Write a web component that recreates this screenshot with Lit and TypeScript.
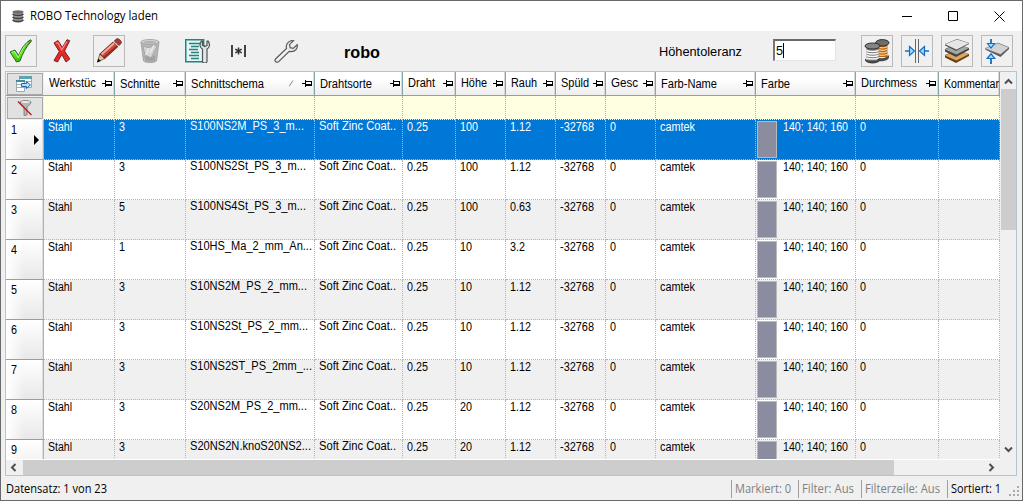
import { LitElement, html, css, svg } from "lit";
import { customElement, property } from "lit/decorators.js";
import { classMap } from "lit/directives/class-map.js";
import { styleMap } from "lit/directives/style-map.js";

/* A single line of text condensed or widened to a given pixel width. */
@customElement("fit-text")
class FitText extends LitElement {
  @property({ type: Number }) w = 0;
  @property() text = "";
  static styles = css`
    :host { display: block; white-space: pre; overflow: visible; flex: none; }
    .t { display: inline-block; transform-origin: 0 0; }
  `;
  render() {
    return html`<span class="t">${this.text}</span>`;
  }
  updated() {
    const el = this.renderRoot.querySelector(".t") as HTMLElement;
    this.style.width = this.w + "px";
    const natural = el.getBoundingClientRect().width;
    if (natural > 0) el.style.transform = `scaleX(${this.w / natural})`;
  }
}

interface Column { name: string; width: number; textWidth: number; low?: boolean; sort?: boolean; pin?: boolean }

const columns: Column[] = [
  { name: "Werkstüc", width: 71, textWidth: 47 },
  { name: "Schnitte", width: 71, textWidth: 40, low: true },
  { name: "Schnittschema", width: 129, textWidth: 73, low: true, sort: true },
  { name: "Drahtsorte", width: 88, textWidth: 52, low: true },
  { name: "Draht", width: 53, textWidth: 27 },
  { name: "Höhe", width: 50, textWidth: 26 },
  { name: "Rauh", width: 50, textWidth: 26 },
  { name: "Spüld", width: 50, textWidth: 28 },
  { name: "Gesc", width: 50, textWidth: 27 },
  { name: "Farb-Name", width: 100, textWidth: 56, low: true },
  { name: "Farbe", width: 100, textWidth: 29, low: true },
  { name: "Durchmess", width: 83, textWidth: 56 },
  { name: "Kommentar", width: 61, textWidth: 55, low: true, pin: false },
];

const records: [string, string, number, string, string][] = [
  ["3", "S100NS2M_PS_3_m...", 114, "100", "1.12"],
  ["3", "S100NS2St_PS_3_m...", 116, "100", "1.12"],
  ["5", "S100NS4St_PS_3_m...", 116, "100", "0.63"],
  ["1", "S10HS_Ma_2_mm_An...", 122, "10", "3.2"],
  ["3", "S10NS2M_PS_2_mm...", 117, "10", "1.12"],
  ["3", "S10NS2St_PS_2_mm...", 118, "10", "1.12"],
  ["3", "S10NS2ST_PS_2mm_...", 122, "10", "1.12"],
  ["3", "S20NS2M_PS_2_mm...", 117, "20", "1.12"],
  ["3", "S20NS2N.knoS20NS2...", 121, "20", "1.12"],
];

const numWidth: Record<string, number> = { "100": 18, "10": 12, "20": 12, "1.12": 21, "0.63": 21, "3.2": 15 };

const pin = html`<svg class="pin" width="10" height="9" viewBox="0 0 10 9" shape-rendering="crispEdges">
  <path d="M0 4h4v1H0zM3 1h1v7H3z" fill="#000"/><path fill-rule="evenodd" d="M4 2h6v5H4zM4 3v2h5V3z" fill="#000"/></svg>`;

const wrenchPath = "M1.5 22.5c-1-1-.6-2 .5-3L12.500 9.500c-.8-3.500 1-7 5-8l2 .2-4 4 .7 3 3 .7 4-3.700c.8 3-1.500 7-6 7l-2-.3L5 22.300c-1 1.200-2.500 1.200-3.500.2z";

const icons = {
  check: svg`<svg width="24" height="24" viewBox="0 0 24 24"><defs><linearGradient id="g" x1="0" y1="0" x2="0" y2="1"><stop offset="0" stop-color="#2fae10"/><stop offset=".6" stop-color="#62f018"/><stop offset="1" stop-color="#35b708"/></linearGradient></defs>
    <path d="M1 13l5-2 3.500 5.500C12 10 16 4 21.500.700L22.500 2C17 8 13.500 14.500 11 22l-3.500 1z" fill="url(#g)" stroke="#385d2b" stroke-width="1"/><path d="M2.800 13.300l2.700-1 3.700 6.500C12 12 15 7 19 3.500" fill="none" stroke="#c9ffb0" stroke-width=".8"/></svg>`,
  cross: svg`<svg width="18" height="24" viewBox="0 0 18 24"><path d="M1 4l4-2.500 4.300 7L14 .7l2.700 1L11.500 12l5.300 8-3.800 3-4.200-7.500L4.500 23 1 21.500l5.300-9z" fill="#e52a2a" stroke="#7d2020"/><path d="M2.800 4.500l2-1 4 7.300 5-8.300" fill="none" stroke="#ff8d88" stroke-width="1.200"/></svg>`,
  pencil: svg`<svg width="26" height="26" viewBox="0 0 26 26"><path d="M1.500 24l2.300-8 5 4.500z" fill="#e6c091" stroke="#5e4530" stroke-width=".7"/><path d="M1 24.500l1.200-4 2.700 2.400z" fill="#16120f"/><path d="M3.800 16L17 4l5 4.500L8.800 20.500z" fill="#cc473b" stroke="#612019" stroke-width=".9"/><path d="M5.500 16.600L18 5.200" stroke="#f5a69a" stroke-width="2"/><path d="M8 19.500L21 8" stroke="#8c281f" stroke-width="1.300"/><path d="M17 4l1.200-1.100 5 4.500L22 8.500z" fill="#bcc0c5"/><path d="M18.200 2.900L20.500.8c1.500-1 6 2.500 4.800 4.500l-2.100 2.100z" fill="#a83a33" stroke="#63211c" stroke-width=".6"/></svg>`,
  trash: svg`<svg width="20" height="24" viewBox="0 0 20 24"><path d="M1 3l2.500 19c2 2 11 2 13 0L19 3z" fill="#b8b8b8" stroke="#999" stroke-width=".8"/><path d="M3 7l6 2 5-3 3 1-6 12-6-3z" fill="#d6d6d6" stroke="#999" stroke-width=".7"/><path d="M9 9l-3 7M14 6l-4 8" stroke="#f4f4f4"/><path d="M4.500 17l.8 4.500c2 1.200 7.500 1.200 9.500 0l.8-6-4 3z" fill="#a2a2a2"/><ellipse cx="10" cy="3" rx="9" ry="2.500" fill="#d2d2d2" stroke="#999" stroke-width=".8"/><ellipse cx="10" cy="3.300" rx="6.500" ry="1.300" fill="#b0b0b0"/></svg>`,
  sheet: svg`<svg width="26" height="24" viewBox="0 0 26 24"><path d="M.7.7h18v22H.7z" fill="#e7f6f5" stroke="#27817f" stroke-width="1.400"/><path d="M4 4.500h12M6 7.500h8M4 10.500h9M6 13.500h8M4 16.500h10M6 19.500h8" stroke="#27817f" stroke-width="1.300"/><path d="M1.500 1.500v20" stroke="#7cc1bf"/><path d="M17.500 23V10c-2.500-1-3.500-5-1-8l1 .3v4l2.200 1.200L22 6.300v-4l1-.3c2.500 3 1.500 7-1 8v13c-1 1.300-3.500 1.300-4.500 0z" fill="#e5e5e5" stroke="#4d5656" stroke-width="1.200"/></svg>`,
  star: svg`<svg width="15" height="14" viewBox="0 0 15 14"><path d="M1 1v12M14 1v12" stroke="#303030" stroke-width="1.800"/><path d="M7.500 3.500v7M4.300 5.200l6.400 3.600M10.700 5.200L4.300 8.800" stroke="#303030" stroke-width="1.500"/></svg>`,
  wrench: svg`<svg width="24" height="24" viewBox="0 0 24 24"><path d="${wrenchPath}" fill="#e9e9e9" stroke="#5c5c5c" stroke-width="1.200"/><path d="M3 21L14 10.500" stroke="#fff"/></svg>`,
  spools: svg`<svg width="26" height="25" viewBox="0 0 26 25"><path d="M13 4v14h10.500V4z" fill="#b5651c"/><path d="M14 8c3 1 7 1 9.500-.5M14 10.500c3 1 7 1 9.500-.5M14 13c3 1 7 1 9.500-.5M14 15.500c3 1 7 1 9.500-.5" fill="none" stroke="#ffd08a" stroke-width="1.300"/><path d="M13 18.500c5 1.500 10 .5 12-2.500v2.500c-1 3.500-8 4.500-12 3.500z" fill="#4a4a4a"/><ellipse cx="18.300" cy="3.800" rx="6.700" ry="3.200" fill="#6d6d6d" stroke="#303030"/><path d="M2.500 8v12c3 2.500 9 2.500 12 0V8z" fill="#777"/><path d="M2.500 11.500c3 1.300 9 1.300 12 0M2.500 14c3 1.300 9 1.300 12 0M2.500 16.500c3 1.300 9 1.300 12 0M2.500 19c3 1.300 9 1.300 12 0" fill="none" stroke="#fafafa" stroke-width="1.500"/><path d="M1 19.500c2 3 13 3 15 0v2c-2 4-13 4-15 0z" fill="#454545"/><ellipse cx="8.500" cy="7" rx="7.500" ry="3" fill="#858585" stroke="#303030"/></svg>`,
  gap: svg`<svg width="24" height="24" viewBox="0 0 24 24"><path d="M10.500 0v24M13.500 0v24" stroke="#666"/><path d="M0 12h5M24 12h-5" stroke="#146ec2" stroke-width="1.500"/><path d="M4.500 7.500L9.500 12l-5 4.500zM19.500 7.500l-5 4.500 5 4.500z" fill="#9edcff" stroke="#126dc7" stroke-width="1.200"/></svg>`,
  layers: svg`<svg width="26" height="25" viewBox="0 0 26 25"><path d="M1 18.500l11 5.500 13-7v-2l-12-4-12 5z" fill="#6b4116"/><path d="M1 16.500l12-5 12 3.500-12.500 6.500z" fill="#dfa65c"/><path d="M1 12.500l11 5.500 13-7V9L13 5 1 10z" fill="#444"/><path d="M1 10.500l12-5 12 3.500-12.500 6.500z" fill="#a7a7a7"/><path d="M1 6.500L12 12l13-7V4L13 0 1 5z" fill="#555"/><path d="M1 5.200L13 .5l12 3.800L12.500 10.500z" fill="#e6e6e6"/></svg>`,
  height: svg`<svg width="26" height="25" viewBox="0 0 26 25"><path d="M1 10.500L16.500 18 25 10V8.500L14 4z" fill="#595959"/><path d="M1 9.500L14 4l11 4.500-8.500 7z" fill="#d2d2d2" stroke="#777" stroke-width=".6"/><path d="M7 0v5M7 25v-5" stroke="#126dc7" stroke-width="1.800"/><path d="M3.500 4.500l3.500 4.500 3.500-4.500zM3.200 19.500L7 14.800l3.800 4.700z" fill="#a7dfff" stroke="#126dc7" stroke-width="1.200"/></svg>`,
  tables: svg`<svg width="18" height="17" viewBox="0 0 18 17"><path d="M3.500.5h12v11h-12z" fill="#fff" stroke="#9aa9ad"/><path d="M3 0h13v3H3z" fill="#5ba5b2"/><path d="M.5 4.500h8v11h-8z" fill="#fff" stroke="#9aa9ad"/><path d="M0 4h9v2H0z" fill="#448b98"/><path d="M1 8.500h7M1 11.500h7M9 5.500h6" stroke="#a5afb3"/><path d="M5.500 7.500h5v-2l4 3.500-4 3.500v-2h-5z" fill="#b7e0ff" stroke="#1767b5"/></svg>`,
  filter: svg`<svg width="16" height="16" viewBox="0 0 16 16"><path d="M3 2c2-2 9-2 11 0 0 2-3 4-4 5v8l-3 .5V7C6 6 3 4 3 2z" fill="#b7b7b7" stroke="#727272" stroke-width=".8"/><ellipse cx="8.500" cy="2" rx="4.500" ry="1" fill="#e8e8e8"/><path d="M1 1.500L14.500 15" stroke="#b82222" stroke-width="1.500"/></svg>`,
  app: svg`<svg width="12" height="13" viewBox="0 0 12 13"><path d="M1 2v9c1.500 2 8.500 2 10 0V2z" fill="#999"/><path d="M.5 4c2 2 9 2 11 0M.5 7c2 2 9 2 11 0M.5 10c2 2 9 2 11 0" fill="none" stroke="#404040" stroke-width="1.300"/><ellipse cx="6" cy="2" rx="5.500" ry="1.700" fill="#6c6c6c"/></svg>`,
};

const chevron = (d: string) => svg`<svg width="9" height="9" viewBox="0 0 9 9"><path d="${d}" fill="none" stroke="#505050" stroke-width="2"/></svg>`;

@customElement("app-root")
class AppRoot extends LitElement {
  static styles = css`
    :host { display: block; width: 1023px; height: 501px; overflow: hidden; color: #000; font: 12px/14px "Liberation Sans", Arial, sans-serif; }
    * { box-sizing: border-box; }
    svg { display: block; flex: none; }
    .window { width: 1023px; height: 501px; border: 1px solid #67696b; background: #f0f0f0; display: flex; flex-direction: column; }
    .title { height: 30px; flex: none; background: #fff; display: flex; align-items: center; padding-left: 11px; font: 12px/16px "Open Sans", "Noto Sans", sans-serif; }
    .title fit-text { margin-left: 6px; }
    .controls { margin-left: auto; display: flex; gap: 36px; padding-right: 17px; }
    .toolbar { height: 40px; flex: none; display: flex; align-items: center; padding: 0 9px 0 4px; }
    .tool { width: 32px; height: 32px; flex: none; display: flex; align-items: center; justify-content: center; }
    .framed { border: 1px solid #b9b9b9; }
    .gap8 { margin-left: 8px; }
    .gap9 { margin-left: 9px; }
    .gap15 { margin-left: 15px; }
    .gap16 { margin-left: 16px; }
    .brand { font: bold 16px/20px "Liberation Sans", sans-serif; margin: 4px 0 0 42px; }
    .label { font-size: 13px; line-height: 16px; margin: 1px 0 0 auto; }
    .input { width: 63px; height: 22px; margin: 0 25px 3px 31px; border: 1px solid #e3e3e3; border-top: 2px solid #696969; border-left: 2px solid #777; background: #fff; display: flex; padding: 2px 0 0 1px; font-size: 13px; line-height: 15px; }
    .caret { width: 1px; height: 15px; background: #000; }
    .grid { width: 1012px; height: 405px; margin-left: 4px; flex: none; border: 1px solid #b3c6d3; display: grid; grid-template-columns: 994px 16px; grid-template-rows: 387px 16px; }
    .view { overflow: hidden; background: #fff; }
    .line { display: flex; height: 40px; width: 994px; }
    .head { height: 24px; border-bottom: 1px solid #86a5a6; }
    .filters { height: 24px; }
    .corner { width: 38px; flex: none; padding: 1px 1px 0; background: #f0f0f0; }
    .cornerbox { height: 22px; width: 36px; background: #e1e1e1; border: 1px solid #a8a8a8; display: flex; align-items: center; justify-content: center; }
    .hcell { flex: none; height: 23px; display: flex; align-items: flex-start; padding: 4px 2px 0 5px; background: linear-gradient(#fff 0 30%, #eee); border-right: 1px solid #86a5a6; box-shadow: inset -1px 0 #d9d9d9; overflow: hidden; }
    .hcell.low { padding-top: 5px; }
    .hcell .pin { margin: 3px 0 0 auto; }
    .hcell.low .pin { margin-top: 2px; }
    .sort { margin: 3px 0 0 auto; }
    .hcell .sort + .pin { margin-left: 7px; }
    .fcell { flex: none; background: #ffffe1; border-right: 1px dotted #b0b0b0; border-bottom: 1px dotted #0078d7; }
    .rownum { width: 38px; flex: none; font-size: 12px; padding: 3px 2px 0 5px; background: linear-gradient(90deg, #fff, transparent 50%), linear-gradient(#fff, #e8e8e8); border-bottom: 1px solid #86a5a6; border-right: 1px solid #aab4b4; box-shadow: inset -1px 0 #ddd; }
    .arrow { margin: -2px 0 0 23px; }
    .cell { flex: none; padding: 1px 0 0 4px; border-right: 1px dotted #b5b5b5; border-bottom: 1px dotted #b5b5b5; background: #fff; overflow: hidden; display: flex; }
    .cell fit-text { margin-top: -1px; }
    .cell.up fit-text { margin-top: -2px; }
    .alt .cell { background: #f0f0f0; }
    .selected .cell { background: #0078d7; color: #fff; }
    .cell.farbe { padding-left: 1px; }
    .swatch { width: 20px; height: 37px; margin-right: 6px; border: 1px solid #b9b9b9; background: #8c8ca0; }
    .vbar { display: flex; flex-direction: column; align-items: center; }
    .vthumb { width: 15px; height: 141px; background: #cdcdcd; }
    .vtop { height: 17px; padding-top: 5px; }
    .vend { margin-top: auto; padding-bottom: 5px; }
    .hbar { display: flex; align-items: center; border-top: 1px solid #fff; }
    .hstart { width: 17px; padding-left: 3px; }
    .hthumb { width: 871px; height: 15px; background: #cdcdcd; }
    .hend { margin-left: auto; padding-right: 4px; }
    .status { flex: 1; margin-top: 2px; display: flex; align-items: center; padding: 0 1px 1px 5px; font: 12px/16px "Open Sans", "Noto Sans", sans-serif; }
    .right { margin: 0 1px 0 auto; display: flex; color: #808080; }
    .pane { border-left: 1px solid #a0a0a0; height: 18px; padding: 1px 0 0 3px; flex: none; }
    .active { color: #000; }
    .grip { align-self: flex-end; margin: 0 1px 2px 0; }
  `;

  pane(text: string, w: number, width: number, active = false) {
    return html`<div class=${classMap({ pane: true, active })} style=${styleMap({ width: width + "px" })}><fit-text .text=${text} .w=${w}></fit-text></div>`;
  }

  row(r: [string, string, number, string, string], i: number) {
    const texts: [string, number][] = [
      ["Stahl", 24], [r[0], 6], [r[1], r[2]], ["Soft Zinc Coat..", 77], ["0.25", 21], [r[3], numWidth[r[3]]], [r[4], numWidth[r[4]]],
      ["-32768", 34], ["0", 6], ["camtek", 35], ["140; 140; 160", 65], ["0", 6], ["", 0],
    ];
    return html`<div class=${classMap({ line: true, alt: i % 2 === 0 && i > 0, selected: i === 0 })}>
      <div class="rownum"><fit-text .text=${String(i + 1)} .w=${6}></fit-text>
        ${i === 0 ? html`<svg class="arrow" width="5" height="10" viewBox="0 0 5 10"><path d="M0 0l5 5-5 5z"/></svg>` : ""}</div>
      ${columns.map((c, k) => html`<div class=${classMap({ cell: true, up: k === 2 || k === 3, farbe: k === 10 })} style=${styleMap({ width: c.width + "px" })}>
        ${k === 10 ? html`<div class="swatch"></div>` : ""}<fit-text .text=${texts[k][0]} .w=${texts[k][1]}></fit-text></div>`)}
    </div>`;
  }

  render() {
    return html`<div class="window">
      <div class="title">${icons.app}<fit-text .text=${"ROBO Technology laden"} .w=${128}></fit-text>
        <div class="controls">
          <svg width="10" height="10"><path d="M0 5.500h10" stroke="#000"/></svg>
          <svg width="10" height="10"><path d="M.5.5h9v9h-9z" fill="none" stroke="#000"/></svg>
          <svg width="11" height="11"><path d="M.5.5l10 10M10.500.5l-10 10" stroke="#000"/></svg>
        </div>
      </div>
      <div class="toolbar">
        <div class="tool framed">${icons.check}</div>
        <div class="tool gap9">${icons.cross}</div>
        <div class="tool framed gap15">${icons.pencil}</div>
        <div class="tool gap9">${icons.trash}</div>
        <div class="tool gap16">${icons.sheet}</div>
        <div class="tool gap8">${icons.star}</div>
        <div class="tool gap16">${icons.wrench}</div>
        <div class="brand"><fit-text .text=${"robo"} .w=${36}></fit-text></div>
        <div class="label"><fit-text .text=${"Höhentoleranz"} .w=${83}></fit-text></div>
        <div class="input"><fit-text .text=${"5"} .w=${7}></fit-text><div class="caret"></div></div>
        <div class="tool framed">${icons.spools}</div>
        <div class="tool framed gap8">${icons.gap}</div>
        <div class="tool framed gap8">${icons.layers}</div>
        <div class="tool framed gap8">${icons.height}</div>
      </div>
      <div class="grid">
        <div class="view">
          <div class="line head"><div class="corner"><div class="cornerbox">${icons.tables}</div></div>
            ${columns.map((c) => html`<div class=${classMap({ hcell: true, low: !!c.low })} style=${styleMap({ width: c.width + "px" })}>
              <fit-text .text=${c.name} .w=${c.textWidth}></fit-text>
              ${c.sort ? html`<svg class="sort" width="6" height="7"><path d="M0 6.500L4 .5" stroke="#888" fill="none"/></svg>` : ""}
              ${c.pin === false ? "" : pin}</div>`)}
          </div>
          <div class="line filters"><div class="corner"><div class="cornerbox">${icons.filter}</div></div>
            ${columns.map((c) => html`<div class="fcell" style=${styleMap({ width: c.width + "px" })}></div>`)}
          </div>
          ${records.map((r, i) => this.row(r, i))}
        </div>
        <div class="vbar"><div class="vtop">${chevron("M1 6.500l3.500-3.500L8 6.500")}</div><div class="vthumb"></div><div class="vend">${chevron("M1 2.500L4.500 6 8 2.500")}</div></div>
        <div class="hbar"><div class="hstart">${chevron("M6.500 1L3 4.500 6.500 8")}</div><div class="hthumb"></div><div class="hend">${chevron("M2.500 1L6 4.500 2.500 8")}</div></div>
        <div></div>
      </div>
      <div class="status"><fit-text .text=${"Datensatz: 1 von 23"} .w=${101}></fit-text>
        <div class="right">${this.pane("Markiert: 0", 56, 67)}${this.pane("Filter: Aus", 52, 63)}${this.pane("Filterzeile: Aus", 75, 86)}${this.pane("Sortiert: 1", 50, 61, true)}</div>
        <svg class="grip" width="11" height="11" shape-rendering="crispEdges"><path d="M8 0h2v2H8zM4 4h2v2H4zM8 4h2v2H8zM0 8h2v2H0zM4 8h2v2H4zM8 8h2v2H8z" fill="#aaa"/></svg>
      </div>
    </div>`;
  }
}
